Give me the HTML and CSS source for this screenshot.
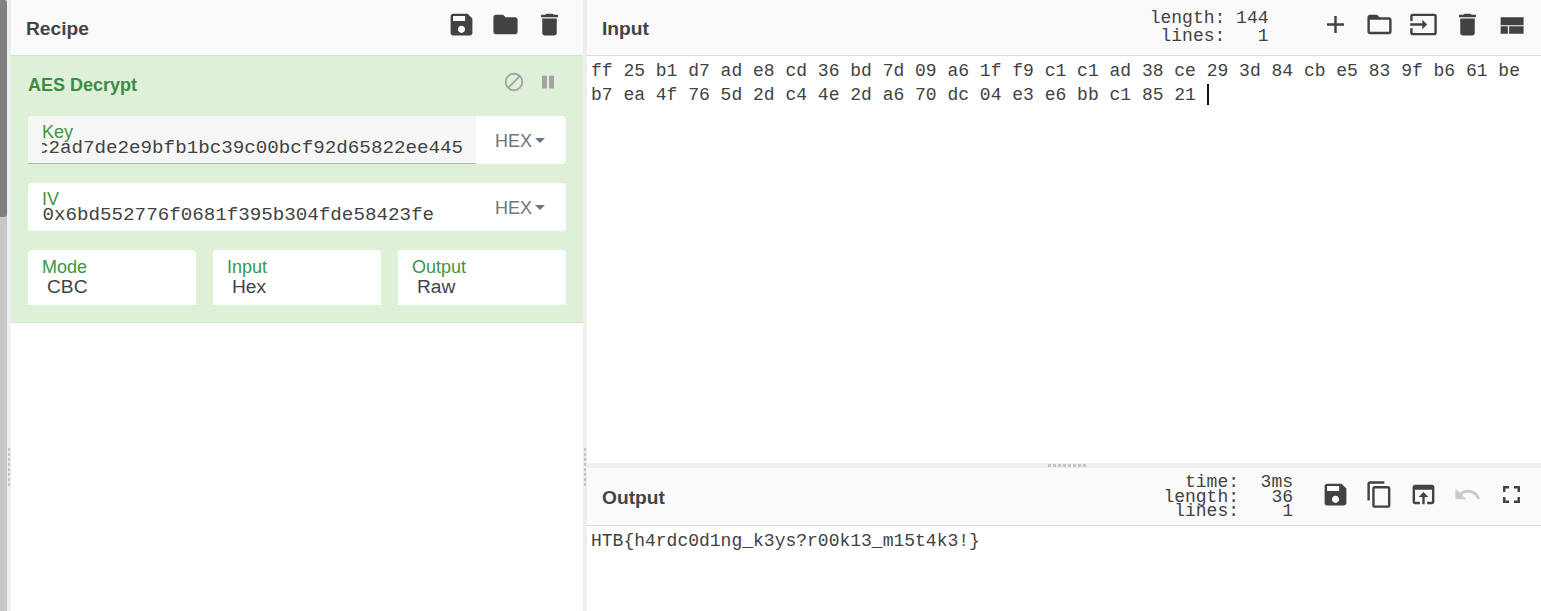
FILE: index.html
```html
<!DOCTYPE html>
<html lang="en">
<head>
<meta charset="utf-8">
<title>CyberChef</title>
<link rel="stylesheet" href="styles.css">
</head>
<body>
<div class="app">
  <div class="scrollbar"><div class="thumb"></div></div>
  <div class="vgutter"></div>
  <section class="recipe">
    <header class="title recipe-title">
      <h2>Recipe</h2>
      <div class="btns recipe-btns">
        <button class="btn"><svg viewBox="0 0 24 24"><path d="M17 3H5c-1.11 0-2 .9-2 2v14c0 1.1.89 2 2 2h14c1.1 0 2-.9 2-2V7l-4-4zm-5 16c-1.66 0-3-1.34-3-3s1.34-3 3-3 3 1.34 3 3-1.34 3-3 3zm3-10H5V5h10v4z"/></svg></button>
        <button class="btn"><svg viewBox="0 0 24 24"><path d="M10 4H4c-1.1 0-1.99.9-1.99 2L2 18c0 1.1.9 2 2 2h16c1.1 0 2-.9 2-2V8c0-1.1-.9-2-2-2h-8l-2-2z"/></svg></button>
        <button class="btn"><svg viewBox="0 0 24 24"><path d="M6 19c0 1.1.9 2 2 2h8c1.1 0 2-.9 2-2V7H6v12zM19 4h-3.5l-1-1h-5l-1 1H5v2h14V4z"/></svg></button>
      </div>
    </header>
    <div class="op">
      <div class="op-head">
        <h3>AES Decrypt</h3>
        <div class="op-ctrl">
          <svg class="ctrl" viewBox="0 0 24 24"><path d="M12 2C6.48 2 2 6.48 2 12s4.48 10 10 10 10-4.48 10-10S17.52 2 12 2zM4 12c0-4.42 3.58-8 8-8 1.85 0 3.55.63 4.9 1.69L5.69 16.9C4.63 15.55 4 13.85 4 12zm8 8c-1.85 0-3.55-.63-4.9-1.69L18.31 7.1C19.37 8.45 20 10.15 20 12c0 4.42-3.58 8-8 8z"/></svg>
          <svg class="ctrl" viewBox="0 0 24 24"><path d="M5.4 5.1h5.5v13.9H5.4zM13.1 5.1h5.5v13.9h-5.5z"/></svg>
        </div>
      </div>
      <div class="row">
        <div class="field field-active">
          <label>Key</label>
          <div class="mono"><span>0xc2ad7de2e9bfb1bc39c00bcf92d65822ee445</span></div>
        </div>
        <div class="addon">HEX<i class="caret-down"></i></div>
      </div>
      <div class="row">
        <div class="field">
          <label>IV</label>
          <div class="mono start"><span>0x6bd552776f0681f395b304fde58423fe</span></div>
        </div>
        <div class="addon">HEX<i class="caret-down"></i></div>
      </div>
      <div class="row triple">
        <div class="select"><label>Mode</label><div class="sel-val">CBC</div></div>
        <div class="select"><label>Input</label><div class="sel-val">Hex</div></div>
        <div class="select"><label>Output</label><div class="sel-val">Raw</div></div>
      </div>
    </div>
  </section>
  <div class="vgutter"></div>
  <section class="io">
    <div class="pane input">
      <header class="title">
        <h2>Input</h2>
        <pre class="stats in-stats">length: 144
 lines:   1</pre>
        <div class="btns">
          <button class="btn"><svg viewBox="0 0 24 24"><path d="M19 13h-6v6h-2v-6H5v-2h6V5h2v6h6v2z"/></svg></button>
          <button class="btn"><svg viewBox="0 0 24 24"><path d="M20 6h-8l-2-2H4c-1.1 0-1.99.9-1.99 2L2 18c0 1.1.9 2 2 2h16c1.1 0 2-.9 2-2V8c0-1.1-.9-2-2-2zm0 12H4V8h16v10z"/></svg></button>
          <button class="btn"><svg viewBox="0 0 24 24"><path d="M21 3.01H3c-1.1 0-2 .9-2 2V9h2V4.99h18v14.03H3V15H1v4.01c0 1.1.9 1.98 2 1.98h18c1.1 0 2-.88 2-1.98v-14c0-1.11-.9-2-2-2zM11 16l4-4-4-4v3H1v2h10v3z"/></svg></button>
          <button class="btn"><svg viewBox="0 0 24 24"><path d="M6 19c0 1.1.9 2 2 2h8c1.1 0 2-.9 2-2V7H6v12zM19 4h-3.5l-1-1h-5l-1 1H5v2h14V4z"/></svg></button>
          <button class="btn"><svg viewBox="0 0 24 24"><path d="M3 6h19v6.6H3zM3 13.4h6v6.3H3zM10 13.4h12v6.3H10z"/></svg></button>
        </div>
      </header>
      <div class="text">ff 25 b1 d7 ad e8 cd 36 bd 7d 09 a6 1f f9 c1 c1 ad 38 ce 29 3d 84 cb e5 83 9f b6 61 be
b7 ea 4f 76 5d 2d c4 4e 2d a6 70 dc 04 e3 e6 bb c1 85 21 <i class="cursor"></i></div>
    </div>
    <div class="hgutter"></div>
    <div class="pane output">
      <header class="title">
        <h2>Output</h2>
        <pre class="stats out-stats">  time:  3ms
length:   36
 lines:    1</pre>
        <div class="btns">
          <button class="btn"><svg viewBox="0 0 24 24"><path d="M17 3H5c-1.11 0-2 .9-2 2v14c0 1.1.89 2 2 2h14c1.1 0 2-.9 2-2V7l-4-4zm-5 16c-1.66 0-3-1.34-3-3s1.34-3 3-3 3 1.34 3 3-1.34 3-3 3zm3-10H5V5h10v4z"/></svg></button>
          <button class="btn"><svg viewBox="0 0 24 24"><path d="M16 1H4c-1.1 0-2 .9-2 2v14h2V3h12V1zm3 4H8c-1.1 0-2 .9-2 2v14c0 1.1.9 2 2 2h11c1.1 0 2-.9 2-2V7c0-1.1-.9-2-2-2zm0 16H8V7h11v14z"/></svg></button>
          <button class="btn"><svg viewBox="0 0 24 24"><path d="M19 4H5c-1.11 0-2 .9-2 2v12c0 1.1.89 2 2 2h4v-2H5V8h14v10h-4v2h4c1.1 0 2-.9 2-2V6c0-1.1-.89-2-2-2zm-7 6l-4 4h3v6h2v-6h3l-4-4z"/></svg></button>
          <button class="btn off"><svg viewBox="0 0 24 24"><path d="M12.5 8c-2.65 0-5.05.99-6.9 2.6L2 7v9h9l-3.62-3.62c1.39-1.16 3.16-1.88 5.12-1.88 3.54 0 6.55 2.31 7.6 5.5l2.37-.78C21.08 11.03 17.15 8 12.5 8z"/></svg></button>
          <button class="btn"><svg viewBox="0 0 24 24"><path d="M7 14H5v5h5v-2H7v-3zm-2-4h2V7h3V5H5v5zm12 7h-3v2h5v-5h-2v3zM14 5v2h3v3h2V5h-5z"/></svg></button>
        </div>
      </header>
      <div class="text">HTB{h4rdc0d1ng_k3ys?r00k13_m15t4k3!}</div>
    </div>
  </section>
</div>
</body>
</html>
```

FILE: styles.css
```css
* { box-sizing: border-box; }
html, body { margin: 0; height: 100%; overflow: hidden; background: #fff; }
body { font-family: "Liberation Sans", Arial, sans-serif; color: #424242; }

.app { display: flex; height: 611px; }

.scrollbar { width: 7px; flex: none; background: #c8c8c8; }
.thumb { height: 217px; background: #808080; border-radius: 0 3px 3px 0; }

.vgutter { width: 4px; flex: none; background: #eeeeee; position: relative; }
.vgutter::after {
  content: ""; position: absolute; left: 1px; top: 448px; width: 2px; height: 38px;
  background: repeating-linear-gradient(to bottom, #c4c4c4 0 3px, transparent 3px 5px);
}

.recipe { width: 572px; flex: none; display: flex; flex-direction: column; }

.title {
  height: 56px; flex: none; display: flex; align-items: center;
  background: #fafafa; border-bottom: 1px solid #dddddd;
  padding: 0 8px 0 15px;
}
.recipe-title { padding: 0 12px 0 15px; }
h2 { margin: 2px 0 0; font-size: 19.2px; font-weight: 700; color: #444444; line-height: 24px; }
.btns { display: flex; margin-left: auto; margin-top: -7px; }
.btn {
  width: 44px; height: 44px; padding: 0; border: 0; background: none;
  display: flex; align-items: center; justify-content: center;
}
.btn svg { width: 29px; height: 29px; fill: #424242; display: block; }
.btn.off svg { fill: #cccccc; }

.op {
  background: #dff0d8; border-bottom: 1px solid #d3e8c8;
  padding: 17px 17px 17px 17px; display: flex; flex-direction: column; gap: 19px;
}
.op-head { display: flex; align-items: flex-start; height: 24px; }
h3 { margin: 0; font-size: 18px; font-weight: 700; color: #3d8b44; line-height: 24px; }
.op-ctrl { margin-left: auto; display: flex; gap: 12px; margin-right: 7px; margin-top: -2px; }
.ctrl { width: 22px; height: 22px; fill: #a3a3a3; display: block; }

.row { display: flex; height: 48px; }
.field {
  flex: 1; min-width: 0; background: #fff; border-radius: 4px 0 0 4px;
  padding: 8px 13px 0 14px; overflow: hidden;
}
.field-active { background: #f6f6f6; border-bottom: 1px solid #a9bfa9; border-radius: 4px 0 0 0; }
label { display: block; font-size: 18px; line-height: 16px; color: #3d963f; }
.mono {
  display: flex; justify-content: flex-end; overflow: hidden; white-space: nowrap;
  font-family: "Liberation Mono", monospace; font-size: 19.2px; line-height: 18px; color: #424242;
  margin-top: -1px;
}
.mono.start { justify-content: flex-start; padding-left: 0.5px; }
.mono span { flex: none; }
.addon {
  width: 90px; flex: none; background: #fff; border-radius: 0 4px 4px 0;
  display: flex; align-items: flex-start; padding: 14px 0 0 19px;
  font-size: 18px; line-height: 22px; color: #6c757d;
}
.caret-down {
  width: 0; height: 0; margin: 8px 0 0 3px;
  border-left: 5.5px solid transparent; border-right: 5.5px solid transparent; border-top: 5px solid #6c757d;
}

.triple { height: 55px; gap: 17px; }
.select { flex: 1; background: #fff; border-radius: 4px 4px 0 0; padding: 8px 14px 0; }
.select label { line-height: 18px; }
.sel-val { font-size: 19.2px; line-height: 20px; margin: 1px 0 0 5px; color: #444444; }

.io { flex: 1; min-width: 0; display: flex; flex-direction: column; }
.pane { display: flex; flex-direction: column; }
.input { height: 463px; flex: none; }
.output { flex: 1; min-height: 0; }
.output .title { height: 58px; }

.hgutter { height: 5px; flex: none; background: #eeeeee; position: relative; }
.hgutter::after {
  content: ""; position: absolute; left: 461px; top: 1px; width: 38px; height: 3px;
  background: repeating-linear-gradient(to right, #c4c4c4 0 3px, transparent 3px 5px);
}

.stats {
  margin: 0 0 0 auto; font-family: "Liberation Mono", monospace; font-size: 18px; color: #424242;
}
.in-stats { line-height: 18px; margin-right: 44.5px; margin-top: -1px; }
.out-stats { line-height: 14.7px; margin-right: 20px; margin-top: 1px; }
.stats + .btns { margin-left: 0; }
.output .btns { margin-top: -4px; }

.text {
  padding: 3px 4px; font-family: "Liberation Mono", monospace; font-size: 18px; line-height: 24px;
  color: #424242; white-space: pre;
}
.cursor {
  display: inline-block; width: 2px; height: 21px; background: #111; vertical-align: -5px;
}
```
